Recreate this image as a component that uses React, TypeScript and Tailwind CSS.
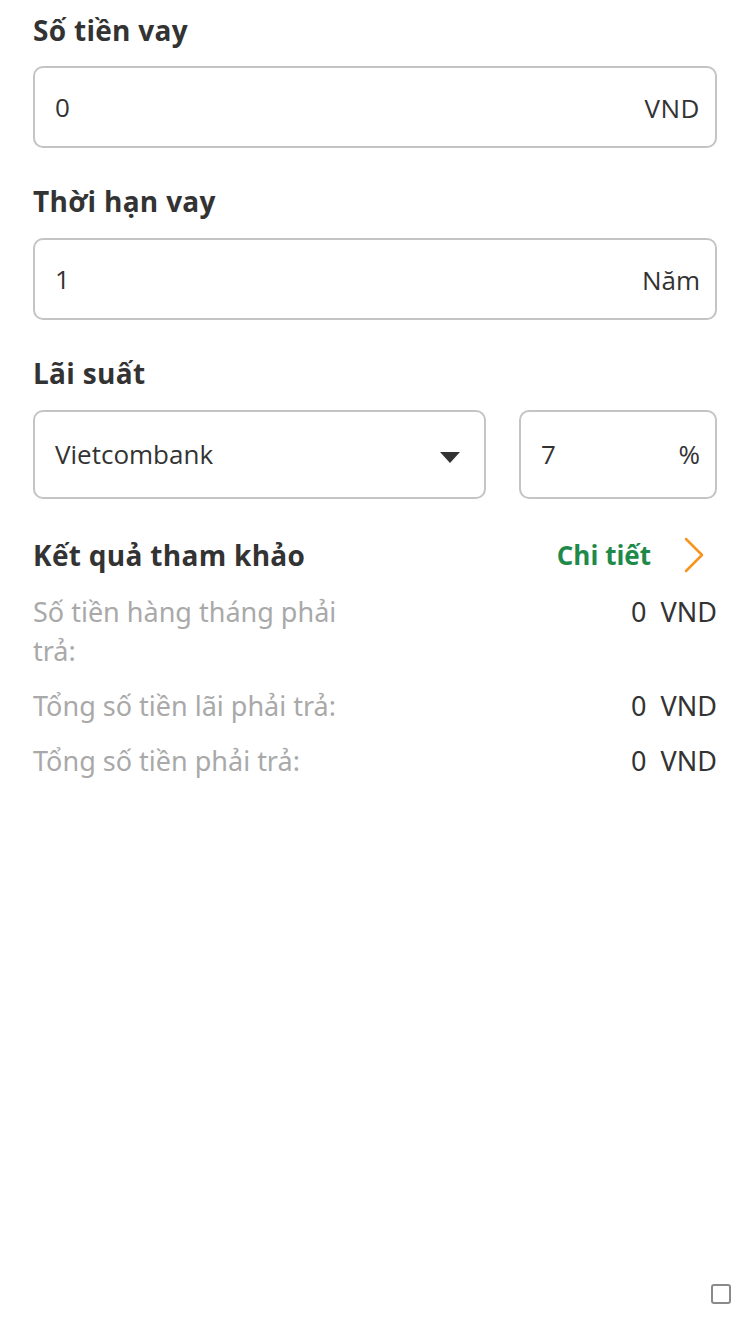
export default function App() {
  const rows = [
    { label: "Số tiền hàng tháng phải trả:", value: "0" },
    { label: "Tổng số tiền lãi phải trả:", value: "0" },
    { label: "Tổng số tiền phải trả:", value: "0" },
  ];

  return (
    <div
      className="w-[750px] h-[1334px] bg-white px-[33px] pt-[10px] relative text-[#333]"
      style={{ fontFamily: "'Open Sans', 'Noto Sans', sans-serif" }}
    >
      {/* Loan amount */}
      <div className="h-[40px] leading-[40px] text-[28px] font-bold tracking-[0.3px]">Số tiền vay</div>
      <div className="mt-[16px] h-[82px] rounded-[10px] border-2 border-[#c4c4c4] flex items-center justify-between pl-[20px] pr-[15px] text-[26px]">
        <span>0</span>
        <span className="pt-[2px] tracking-[0.5px]">VND</span>
      </div>

      {/* Term */}
      <div className="mt-[33px] h-[40px] leading-[40px] text-[28px] font-bold tracking-[0.3px]">Thời hạn vay</div>
      <div className="mt-[17px] h-[82px] rounded-[10px] border-2 border-[#c4c4c4] flex items-center justify-between pl-[20px] pr-[15px] text-[26px]">
        <span>1</span>
        <span className="pt-[2px]">Năm</span>
      </div>

      {/* Interest */}
      <div className="mt-[33px] h-[40px] leading-[40px] text-[28px] font-bold tracking-[0.3px]">Lãi suất</div>
      <div className="mt-[17px] flex gap-[33px]">
        <div className="w-[453px] h-[89px] rounded-[10px] border-2 border-[#c4c4c4] flex items-center justify-between pl-[20px] pr-[24px] text-[26px]">
          <span>Vietcombank</span>
          <svg width="20" height="11" viewBox="0 0 20 11" className="mt-[6px]">
            <path d="M0 0 L20 0 L10 11 Z" fill="#333" />
          </svg>
        </div>
        <div className="flex-1 h-[89px] rounded-[10px] border-2 border-[#c4c4c4] flex items-center justify-between pl-[20px] pr-[15px] text-[26px]">
          <span>7</span>
          <span>%</span>
        </div>
      </div>

      {/* Result */}
      <div className="mt-[36px] flex items-center justify-between h-[40px]">
        <span className="text-[28px] font-bold tracking-[0.3px]">Kết quả tham khảo</span>
        <div className="flex items-center gap-[33px] pr-[13px]">
          <span className="text-[26px] font-bold text-[#1e8a4a]">Chi tiết</span>
          <svg width="20" height="36" viewBox="0 0 20 36">
            <path d="M2 2 L18 18 L2 34" fill="none" stroke="#f7941d" strokeWidth="2.5" strokeLinecap="round" strokeLinejoin="round" />
          </svg>
        </div>
      </div>

      <div
        className="mt-[17px] flex flex-col gap-[16px] text-[27px]"
        style={{ fontFamily: "'Noto Sans', sans-serif" }}
      >
        {rows.map((r) => (
          <div key={r.label} className="flex justify-between items-start leading-[39px]">
            <span className="text-[#a9a9a9] max-w-[320px]">{r.label}</span>
            <span className="text-[#333]">
              {r.value}&nbsp;&nbsp;VND
            </span>
          </div>
        ))}
      </div>

      {/* tiny checkbox */}
      <div className="absolute left-[711px] top-[1284px] w-[20px] h-[20px] rounded-[3px] border-2 border-[#8a8a8a]"></div>
    </div>
  );
}
